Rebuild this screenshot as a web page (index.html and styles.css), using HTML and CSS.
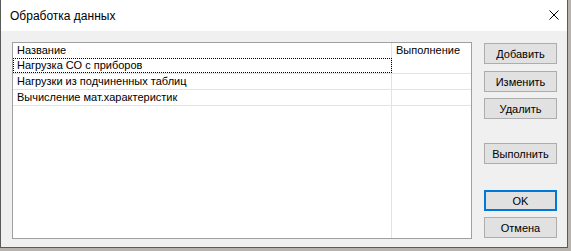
FILE: index.html
```html
<!DOCTYPE html>
<html>
<head>
<meta charset="utf-8">
<link rel="stylesheet" href="styles.css">
</head>
<body>
<div class="window">
  <div class="titlebar">
    <span class="title">Обработка данных</span>
    <svg class="close" width="10" height="10" viewBox="0 0 10 10"><path d="M0.5 0.5 L9.5 9.5 M9.5 0.5 L0.5 9.5" stroke="#000" stroke-width="1" fill="none"/></svg>
  </div>
  <div class="client">
    <div class="listview">
      <div class="row header">
        <div class="c1">Название</div>
        <div class="c2">Выполнение</div>
      </div>
      <div class="row item focus">
        <div class="c1">Нагрузка СО с приборов</div>
        <div class="c2"></div>
      </div>
      <div class="row item">
        <div class="c1">Нагрузки из подчиненных таблиц</div>
        <div class="c2"></div>
      </div>
      <div class="row item">
        <div class="c1">Вычисление мат.характеристик</div>
        <div class="c2"></div>
      </div>
      <div class="row filler">
        <div class="c1"></div>
        <div class="c2"></div>
      </div>
    </div>
    <div class="buttons">
      <button class="btn b-add">Добавить</button>
      <button class="btn b-edit">Изменить</button>
      <button class="btn b-del">Удалить</button>
      <button class="btn b-run">Выполнить</button>
      <button class="btn b-ok default">OK</button>
      <button class="btn b-cancel">Отмена</button>
    </div>
  </div>
</div>
</body>
</html>
```
FILE: styles.css
```css
html, body {
  margin: 0;
  padding: 0;
}
body {
  width: 571px;
  height: 251px;
  background: #b8b2ad;
  overflow: hidden;
  font-family: "Liberation Sans", Arial, sans-serif;
  font-size: 11px;
  color: #000;
}
.window {
  width: 566px;
  height: 247px;
  border-left: 1px solid #5a5a5a;
  border-right: 1px solid #5a5a5a;
  border-bottom: 1px solid #5a5a5a;
  display: flex;
  flex-direction: column;
  background: #f0f0f0;
}
.titlebar {
  height: 31px;
  background: #fff;
  display: flex;
  align-items: center;
  justify-content: space-between;
  padding: 0 8px 0 9px;
  flex: none;
}
.title {
  font-family: "Liberation Sans", Arial, sans-serif;
  font-size: 12px;
  margin-top: 0;
}
.close {
  margin-top: -1px;
}
.client {
  flex: 1;
  display: flex;
  padding: 11px 10px 9px 11px;
  gap: 12px;
}
.listview {
  width: 460px;
  height: 195px;
  border: 1px solid #a0a0a0;
  background: #fff;
  display: flex;
  flex-direction: column;
}
.row {
  display: flex;
  height: 16px;
  flex: none;
}
.row .c1 {
  width: 379px;
  padding-left: 4px;
  box-sizing: border-box;
  line-height: 15px;
  border-right: 1px solid #e3e3e3;
  white-space: nowrap;
}
.row .c2 {
  flex: 1;
  padding-left: 4px;
  line-height: 15px;
}
.row.header {
  height: 15px;
}
.row.item {
  border-bottom: 1px solid #e3e3e3;
  height: 15px;
}
.row.item .c1 {
  line-height: 15px;
}
.row.focus .c1 {
  outline: 1px dotted #000;
  outline-offset: -1px;
}
.row.filler {
  flex: 1;
}
.buttons {
  display: flex;
  flex-direction: column;
}
.btn {
  width: 73px;
  height: 21px;
  padding: 0;
  border: 1px solid #adadad;
  background: #e1e1e1;
  font-family: "Liberation Sans", Arial, sans-serif;
  font-size: 11px;
  color: #000;
  flex: none;
}
.btn.default {
  border: 2px solid #0078d7;
}
.b-add { margin-top: 1px; }
.b-edit { margin-top: 7px; }
.b-del { margin-top: 6px; }
.b-run { margin-top: 24px; }
.b-ok { margin-top: 26px; }
.b-cancel { margin-top: 6px; }
```
